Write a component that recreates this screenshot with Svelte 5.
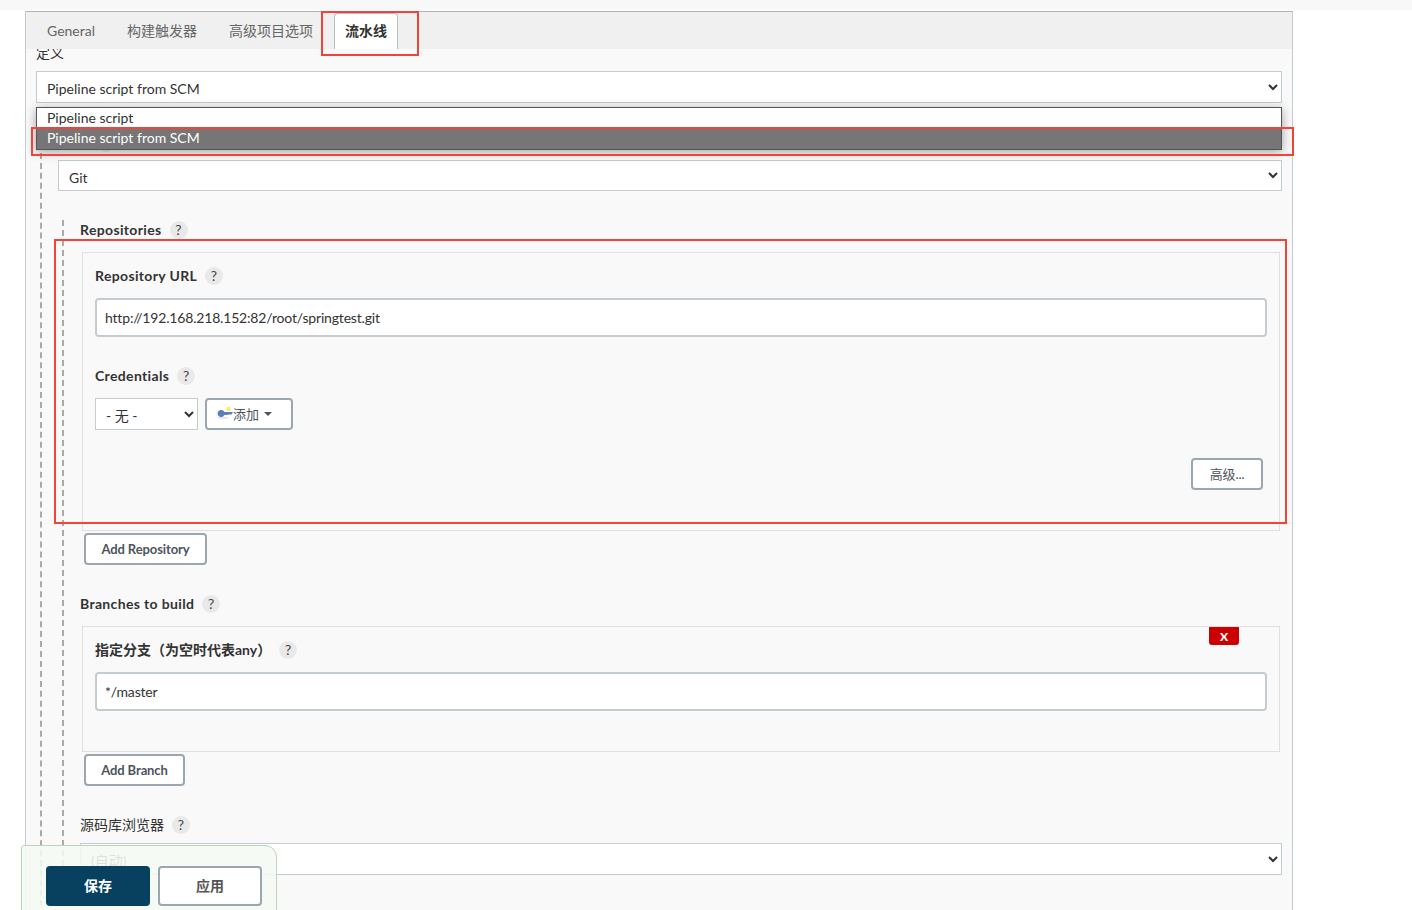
<script>
  const tabs = ['General', '构建触发器', '高级项目选项', '流水线'];
  const defOptions = ['Pipeline script', 'Pipeline script from SCM'];
</script>

{#snippet help()}
  <span class="help">?</span>
{/snippet}

<div class="page">
  <div class="band"></div>

  <div class="panel">
    <nav class="tabs">
      {#each tabs as tab, i}
        <span class="tab" class:active={i === 3}>{tab}</span>
      {/each}
    </nav>

    <div class="content">
      <div class="label plain">定义</div>
      <div class="def">
        <select class="select">
          <option>Pipeline script from SCM</option>
        </select>
        <ul class="popup">
          {#each defOptions as opt, i}
            <li class:selected={i === 1}>{opt}</li>
          {/each}
        </ul>
      </div>

      <div class="scm">
        <div class="label">SCM {@render help()}</div>
        <select class="select git">
          <option>Git</option>
        </select>

        <div class="git-config">
          <div class="label">Repositories {@render help()}</div>
          <div class="box repo">
            <div class="label">Repository URL {@render help()}</div>
            <input class="input" value="http://192.168.218.152:82/root/springtest.git" />

            <div class="label cred-label">Credentials {@render help()}</div>
            <div class="cred-row">
              <select class="select cred">
                <option>- 无 -</option>
              </select>
              <button class="btn add">
                <svg class="key" viewBox="0 0 16 12" width="16" height="12" aria-hidden="true">
                  <ellipse cx="6" cy="10.8" rx="5.5" ry="1" fill="#e3e6ea" />
                  <path d="M15.5 5H7.4a3.6 3.6 0 1 0 0 3h2.8l.8-.8.8.8 1-.9 1 .9 1.7-1.8z" fill="#5a80b8" />
                  <circle cx="11.5" cy="2" r="2.2" fill="#f5ee6a" />
                </svg>添加
                <span class="caret"></span>
              </button>
            </div>
            <div class="advanced-row">
              <button class="btn advanced">高级...</button>
            </div>
          </div>
          <button class="btn below add-repo">Add Repository</button>

          <div class="label section">Branches to build {@render help()}</div>
          <div class="box branch">
            <button class="remove">X</button>
            <div class="label cjk">指定分支（为空时代表any） {@render help()}</div>
            <input class="input" value="*/master" />
          </div>
          <button class="btn below add-branch">Add Branch</button>

          <div class="label section plain">源码库浏览器 {@render help()}</div>
          <select class="select browser">
            <option>(自动)</option>
          </select>

          <div class="label additional">Additional Behaviours</div>
        </div>
      </div>
    </div>
  </div>

  <div class="savebar">
    <button class="save">保存</button>
    <button class="apply">应用</button>
  </div>

  <!-- annotations drawn on top of the screenshot -->
  <div class="mark mark-tab"></div>
  <div class="mark mark-option"></div>
  <div class="mark mark-repo"></div>
</div>

<style>
  :global(body) {
    margin: 0;
    background: #fff;
    overflow: hidden;
  }

  .page {
    position: relative;
    height: 910px;
    overflow: hidden;
    font-family: Lato, "Noto Sans CJK SC", sans-serif;
    font-size: 14px;
    color: #333;
  }

  .band {
    height: 10px;
    background: #f8f8f8;
  }

  .panel {
    box-sizing: border-box;
    width: 1268px;
    height: 900px;
    margin: 1px 0 0 25px;
    background: #f9f9f9;
    border: 1px solid #c3ccd1;
    border-top-color: #a9b4bb;
    border-bottom: 0;
  }

  .tabs {
    position: relative;
    z-index: 1;
    display: flex;
    gap: 10px;
    height: 37px;
    padding-left: 10px;
    background: #f0f0f0;
  }

  .tab {
    box-sizing: border-box;
    padding: 1px 11px 0;
    line-height: 36px;
    color: #666;
  }

  .tab.active {
    padding: 0 10px;
    margin-top: 1px;
    line-height: 34px;
    background: #fff;
    color: #333;
    font-weight: 700;
    border: 1px solid #b4bec5;
    border-bottom: 0;
    border-radius: 4px 4px 0 0;
  }

  .content {
    padding: 0 10px;
    margin-top: -6px;
  }

  .label {
    display: flex;
    align-items: center;
    gap: 8px;
    height: 20px;
    font-weight: 700;
    letter-spacing: 0.35px;
    color: #333;
    line-height: 18px;
  }

  .label.plain,
  .label.cjk {
    letter-spacing: 0;
  }

  .label.plain {
    font-weight: 400;
  }

  .section {
    margin-top: 29px;
  }

  .additional {
    margin-top: 31px;
  }

  .help {
    display: inline-flex;
    align-items: center;
    justify-content: center;
    width: 18px;
    height: 18px;
    border-radius: 50%;
    background: #e9e9e9;
    color: #444;
    font-size: 14px;
    font-weight: 400;
  }

  .select {
    display: block;
    box-sizing: border-box;
    width: 100%;
    height: 32px;
    padding: 3px 6px 0;
    font: inherit;
    color: #333;
    background-color: #fff;
    border: 1px solid #c3ccd1;
    border-radius: 0;
  }

  .def {
    position: relative;
    margin-top: 8px;
  }

  .popup {
    position: absolute;
    top: 36px;
    left: 0;
    right: 0;
    z-index: 2;
    box-sizing: border-box;
    height: 43px;
    margin: 0;
    padding: 0;
    list-style: none;
    background: #fff;
    border: 1px solid #555;
    box-shadow: 0 2px 10px rgba(0, 0, 0, 0.35);
  }

  .popup li {
    height: 21px;
    padding-left: 10px;
    line-height: 20px;
  }

  .popup .selected {
    height: 20px;
    line-height: 18px;
    background: #767676;
    color: #fff;
  }

  .scm {
    margin: 30px 0 0 4px;
    padding-left: 16px;
    border-left: 2px dashed #aaa;
  }

  .git {
    height: 31px;
    margin-top: 7px;
    padding-top: 4px;
  }

  .git-config {
    margin: 29px 0 0 4px;
    padding-left: 16px;
    border-left: 2px dashed #aaa;
  }

  .box {
    position: relative;
    padding: 13px 12px 40px;
    margin: 12px 2px 0;
    background: #f9f9f9;
    border: 1px solid #e0e0e0;
  }

  .input {
    display: block;
    box-sizing: border-box;
    width: 100%;
    height: 39px;
    margin-top: 12px;
    padding: 0 8px;
    font: inherit;
    letter-spacing: -0.18px;
    color: #333;
    background: #fff;
    border: 2px solid #c3ccd1;
    border-radius: 4px;
  }

  .cred-label {
    margin-top: 29px;
  }

  .cred-row {
    display: flex;
    gap: 7px;
    margin-top: 12px;
  }

  .cred {
    width: 103px;
    padding-top: 2px;
  }

  .btn {
    box-sizing: border-box;
    height: 32px;
    padding: 0;
    font: inherit;
    font-size: 13px;
    font-weight: 700;
    letter-spacing: -0.1px;
    color: #4d545d;
    background: #fff;
    border: 2px solid #9aa7b0;
    border-radius: 4px;
  }

  .add {
    display: flex;
    align-items: center;
    width: 88px;
    padding: 0 0 2px 10px;
    font-weight: 400;
  }

  .key {
    flex: none;
  }

  .caret {
    margin: 2px 0 0 5px;
    border: 4.5px solid transparent;
    border-top: 4.5px solid #4d545d;
    border-bottom: 0;
  }

  .advanced-row {
    display: flex;
    justify-content: flex-end;
    margin: 28px 4px 0 0;
  }

  .advanced {
    width: 72px;
    padding-bottom: 2px;
    font-weight: 400;
  }

  .below {
    display: block;
    margin: 2px 0 0 4px;
  }

  .add-repo {
    width: 123px;
  }

  .add-branch {
    width: 101px;
  }

  .remove {
    position: absolute;
    top: 0;
    right: 40px;
    width: 30px;
    height: 18px;
    padding: 0;
    font: inherit;
    font-size: 12px;
    font-weight: 900;
    color: #fff;
    background: #c00;
    border: 0;
    border-radius: 0 0 3px 3px;
  }

  .browser {
    margin-top: 8px;
  }

  .savebar {
    position: absolute;
    left: 21px;
    top: 845px;
    z-index: 3;
    box-sizing: border-box;
    display: flex;
    gap: 8px;
    width: 256px;
    height: 70px;
    padding: 20px 0 0 24px;
    background: rgba(244, 250, 242, 0.88);
    border: 1px solid #b7d6bb;
    border-radius: 3px 12px 0 0;
  }

  .save,
  .apply {
    box-sizing: border-box;
    width: 104px;
    height: 40px;
    padding: 0 0 2px;
    font: inherit;
    font-weight: 700;
    border-radius: 4px;
  }

  .save {
    color: #fff;
    background: #08405f;
    border: 0;
  }

  .apply {
    color: #555;
    background: #fff;
    border: 2px solid #9aa7b0;
  }

  .mark {
    position: absolute;
    z-index: 4;
    box-sizing: border-box;
    border: 2px solid #f44336;
    pointer-events: none;
  }

  .mark-tab {
    left: 321px;
    top: 11px;
    width: 98px;
    height: 45px;
  }

  .mark-option {
    left: 31px;
    top: 127px;
    width: 1263px;
    height: 29px;
  }

  .mark-repo {
    left: 54px;
    top: 239px;
    width: 1233px;
    height: 285px;
  }
</style>
